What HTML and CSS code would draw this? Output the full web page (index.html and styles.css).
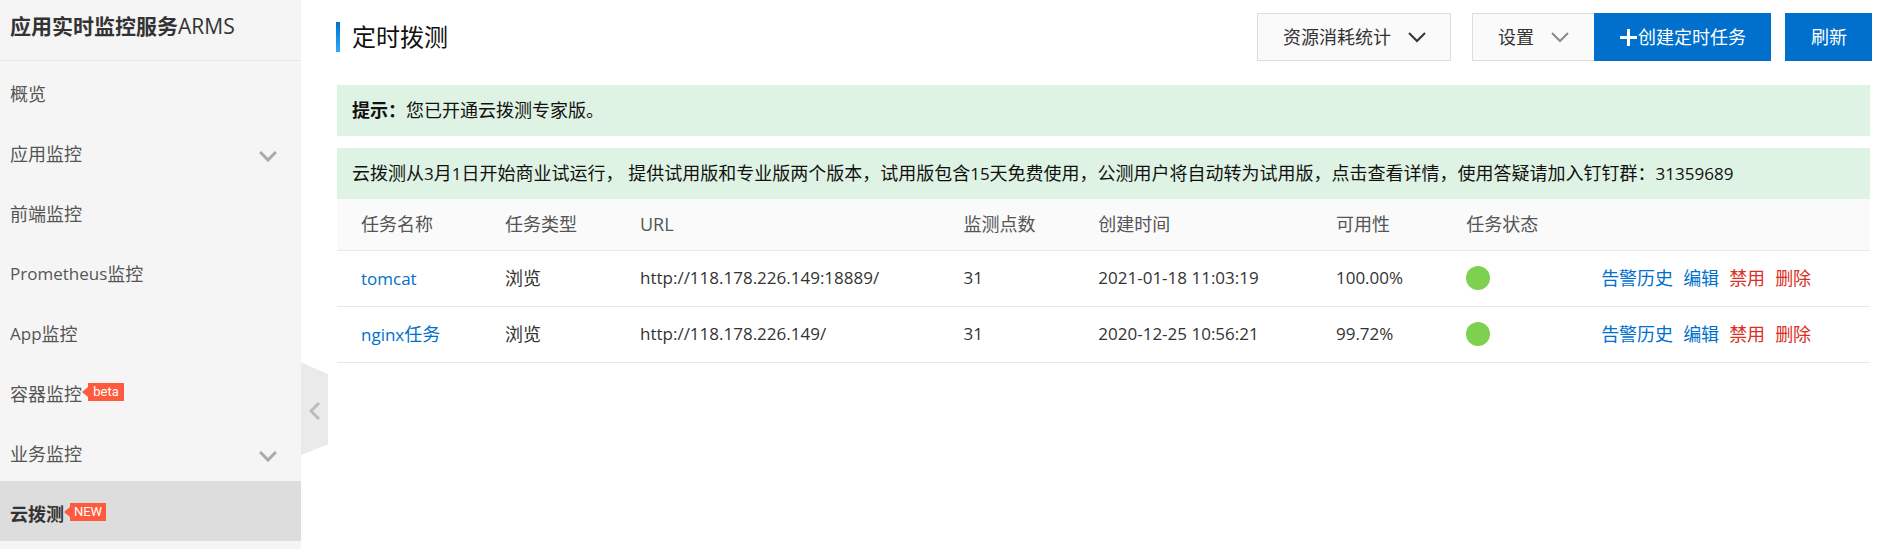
FILE: index.html
```html
<!DOCTYPE html>
<html lang="zh-CN">
<head>
<meta charset="utf-8">
<title>定时拨测</title>
<link rel="stylesheet" href="styles.css">
</head>
<body>
<div class="app">
  <aside class="sidebar">
    <h2 class="product"><b>应用实时监控服务</b>ARMS</h2>
    <nav class="menu">
      <a class="item" href="#">概览</a>
      <a class="item" href="#">应用监控<svg class="chevron muted" viewBox="0 0 18 11"><path d="M1 1l8 8 8-8"/></svg></a>
      <a class="item" href="#">前端监控</a>
      <a class="item" href="#"><span class="latin">Prometheus</span>监控</a>
      <a class="item" href="#"><span class="latin">App</span>监控</a>
      <a class="item" href="#">容器监控<span class="badge">beta</span></a>
      <a class="item" href="#">业务监控<svg class="chevron muted" viewBox="0 0 18 11"><path d="M1 1l8 8 8-8"/></svg></a>
      <a class="item active" href="#">云拨测<span class="badge">NEW</span></a>
    </nav>
  </aside>
  <div class="gutter">
    <button class="collapse" type="button" aria-label="收起">
      <svg class="back" viewBox="0 0 11 18"><path d="M10 1L2 9l8 8"/></svg>
    </button>
  </div>
  <main class="main">
    <header class="top">
      <h1 class="title">定时拨测</h1>
      <div class="actions">
        <button class="btn" type="button">资源消耗统计<svg class="chevron" viewBox="0 0 18 11"><path d="M1 1l8 8 8-8"/></svg></button>
        <div class="group">
          <button class="btn joined" type="button">设置<svg class="chevron gray" viewBox="0 0 18 11"><path d="M1 1l8 8 8-8"/></svg></button>
          <button class="btn primary" type="button"><svg class="plus" viewBox="0 0 17 17"><path d="M8.5 0v17M0 8.5h17"/></svg>创建定时任务</button>
        </div>
        <button class="btn primary" type="button">刷新</button>
      </div>
    </header>
    <div class="content">
      <p class="notice spaced"><b>提示：</b>您已开通云拨测专家版。</p>
      <p class="notice">云拨测从<span class="latin">3</span>月<span class="latin">1</span>日开始商业试运行， 提供试用版和专业版两个版本，试用版包含<span class="latin">15</span>天免费使用，公测用户将自动转为试用版，点击查看详情，使用答疑请加入钉钉群：<span class="latin">31359689</span></p>
      <table class="tasks">
        <colgroup>
          <col class="c-name"><col class="c-type"><col class="c-url"><col class="c-count"><col class="c-time"><col class="c-rate"><col class="c-state"><col>
        </colgroup>
        <thead>
          <tr><th>任务名称</th><th>任务类型</th><th>URL</th><th>监测点数</th><th>创建时间</th><th>可用性</th><th>任务状态</th><th></th></tr>
        </thead>
        <tbody>
          <tr>
            <td><a class="latin" href="#">tomcat</a></td><td>浏览</td><td class="latin">http://118.178.226.149:18889/</td><td class="latin">31</td><td class="latin">2021-01-18 11:03:19</td><td class="latin">100.00%</td><td><span class="dot"></span></td>
            <td><div class="ops"><a href="#">告警历史</a><a href="#">编辑</a><a class="danger" href="#">禁用</a><a class="danger" href="#">删除</a></div></td>
          </tr>
          <tr>
            <td><a href="#"><span class="latin">nginx</span>任务</a></td><td>浏览</td><td class="latin">http://118.178.226.149/</td><td class="latin">31</td><td class="latin">2020-12-25 10:56:21</td><td class="latin">99.72%</td><td><span class="dot"></span></td>
            <td><div class="ops"><a href="#">告警历史</a><a href="#">编辑</a><a class="danger" href="#">禁用</a><a class="danger" href="#">删除</a></div></td>
          </tr>
        </tbody>
      </table>
    </div>
  </main>
</div>
</body>
</html>
```
FILE: styles.css
```css
* { box-sizing: border-box; }
body {
  margin: 0;
  background: #fff;
  color: #333;
  font-family: "Open Sans", "Noto Sans CJK SC", sans-serif;
  font-size: 18px;
  line-height: 24px;
}
a { color: #0070cc; text-decoration: none; }
svg { fill: none; stroke: currentColor; flex: none; }
.latin { font-size: 17px; line-height: 17px; }
.app { display: flex; min-height: 100vh; overflow: hidden; }

.sidebar { flex: none; width: 301px; background: #f5f5f5; }
.product {
  margin: 0;
  height: 61px;
  padding: 13px 10px 0;
  border-bottom: 1px solid #e6e6e6;
  font-size: 21px;
  font-weight: 400;
  line-height: 26px;
}
.menu { display: flex; flex-direction: column; }
.item {
  display: flex;
  align-items: center;
  height: 60px;
  padding: 5px 24px 0 10px;
  color: #555;
}
.item.active { background: #ddd; color: #333; font-weight: 700; }
.chevron { width: 18px; height: 11px; stroke-width: 2; }
.muted { margin-left: auto; margin-top: 6px; color: #aaa; stroke-width: 3; }
.gray { color: #888; }
.badge {
  position: relative;
  width: 36px;
  height: 18px;
  margin: 0 0 4px 6px;
  background: #ff5a3d;
  color: #fff;
  font-family: Roboto, sans-serif;
  font-size: 13px;
  font-weight: 400;
  line-height: 18px;
  text-align: center;
}
.badge::before {
  content: "";
  position: absolute;
  top: 4px;
  right: 100%;
  border: 5px solid transparent;
  border-right: 6px solid #ff5a3d;
  border-left: 0;
}

.gutter { flex: none; width: 35px; padding-top: 66vh; }
.collapse {
  display: flex;
  align-items: center;
  justify-content: center;
  width: 27px;
  height: 93px;
  padding: 4px 0 0;
  border: 0;
  background: #eaeaea;
  clip-path: polygon(0 0, 100% 12px, 100% 82px, 0 100%);
  color: #bbb;
}
.back { width: 11px; height: 18px; stroke-width: 3; }

.main { flex: 1; min-width: 0; padding: 13px 6px 0 0; }
.top { display: flex; justify-content: space-between; align-items: flex-start; }
.title {
  display: flex;
  align-items: center;
  height: 30px;
  margin: 9px 0 0;
  color: #111;
  font-size: 24px;
  font-weight: 400;
  line-height: 30px;
}
.title::before {
  content: "";
  width: 4px;
  height: 30px;
  margin-right: 12px;
  background: linear-gradient(#0070cc, #35a7f8);
}
.actions { display: flex; }
.group { display: flex; margin: 0 14px 0 21px; }
.btn {
  display: flex;
  align-items: center;
  height: 48px;
  padding: 0 24px 0 25px;
  border: 1px solid #ddd;
  background: #fafafa;
  color: #333;
  font: inherit;
}
.btn .chevron { margin-left: 17px; }
.joined { padding-right: 25px; border-right: 0; }
.primary { border-color: #0070cc; background: #0070cc; color: #fff; }
.plus { width: 17px; height: 17px; margin-right: 1px; stroke-width: 3; }

.content { margin: 24px 2px 0 1px; }
.notice { margin: 0; padding: 13px 15px 14px; background: #dff3e4; color: #111; }
.spaced { margin-bottom: 12px; }

.tasks { width: 100%; border-collapse: separate; border-spacing: 0; table-layout: fixed; }
.tasks th, .tasks td {
  padding: 0 0 2px 24px;
  border-bottom: 1px solid #e8e8e8;
  text-align: left;
  white-space: nowrap;
}
.tasks th { height: 52px; background: #fafafa; color: #555; font-weight: 400; }
.tasks td { height: 56px; }
.c-name { width: 9.4%; }
.c-type { width: 8.8%; }
.c-url { width: 21.1%; }
.c-count { width: 8.8%; }
.c-time { width: 15.5%; }
.c-rate { width: 8.5%; }
.c-state { width: 8.8%; }
.dot { display: block; width: 24px; height: 24px; border-radius: 50%; background: #7ed04f; }
.ops { display: flex; gap: 10px; }
.ops .danger { color: #d93026; }
```
